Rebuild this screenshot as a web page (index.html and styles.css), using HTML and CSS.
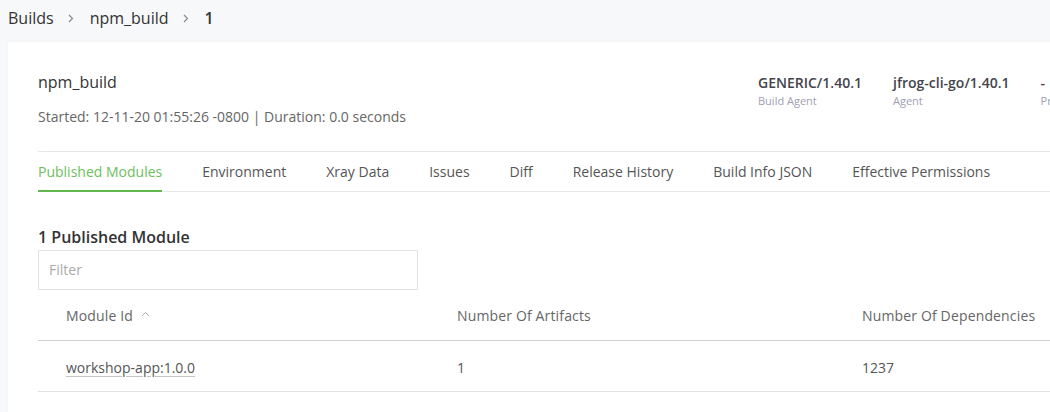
FILE: index.html
```html
<!DOCTYPE html>
<html>
<head>
<meta charset="utf-8">
<link rel="stylesheet" href="styles.css">
</head>
<body>
<nav class="breadcrumb">
  <span class="crumb">Builds</span>
  <svg class="sep" width="6" height="9" viewBox="0 0 6 9"><path d="M1 1l3.5 3.5L1 8" fill="none" stroke="#8a8a8a" stroke-width="1.2"/></svg>
  <span class="crumb">npm_build</span>
  <svg class="sep" width="6" height="9" viewBox="0 0 6 9"><path d="M1 1l3.5 3.5L1 8" fill="none" stroke="#8a8a8a" stroke-width="1.2"/></svg>
  <span class="crumb current">1</span>
</nav>
<main class="card">
  <section class="summary">
    <div class="summary-main">
      <h1 class="title">npm_build</h1>
      <p class="meta">Started: 12-11-20 01:55:26 -0800 | Duration: 0.0 seconds</p>
    </div>
    <div class="agents">
      <div class="agent"><div class="agent-value">GENERIC/1.40.1</div><div class="agent-label">Build Agent</div></div>
      <div class="agent"><div class="agent-value">jfrog-cli-go/1.40.1</div><div class="agent-label">Agent</div></div>
      <div class="agent"><div class="agent-value">-</div><div class="agent-label">Principal</div></div>
    </div>
  </section>
  <div class="tabs">
    <span class="tab active">Published Modules</span>
    <span class="tab">Environment</span>
    <span class="tab">Xray Data</span>
    <span class="tab">Issues</span>
    <span class="tab">Diff</span>
    <span class="tab">Release History</span>
    <span class="tab">Build Info JSON</span>
    <span class="tab">Effective Permissions</span>
  </div>
  <h2 class="section-title">1 Published Module</h2>
  <div class="filter">Filter</div>
  <div class="table">
    <div class="row head">
      <div class="cell">Module Id <svg class="sort" width="9" height="6" viewBox="0 0 9 6"><path d="M1 5l3.5-3.5L8 5" fill="none" stroke="#a8a8a8" stroke-width="1"/></svg></div>
      <div class="cell">Number Of Artifacts</div>
      <div class="cell">Number Of Dependencies</div>
    </div>
    <div class="row">
      <div class="cell"><span class="link">workshop-app:1.0.0</span></div>
      <div class="cell">1</div>
      <div class="cell">1237</div>
    </div>
  </div>
</main>
</body>
</html>
```

FILE: styles.css
```css
html, body {
  margin: 0;
  padding: 0;
}
body {
  background: #f7f8fa;
  font-family: "Open Sans", "Noto Sans", sans-serif;
  color: #333;
  width: 1050px;
  height: 412px;
  overflow: hidden;
}
.breadcrumb {
  display: flex;
  align-items: center;
  padding: 6px 0 0 8px;
  height: 24px;
  font-size: 16px;
  line-height: 24px;
  color: #333;
}
.sep {
  margin: 1px 16px 0 14px;
}
.crumb.current {
  font-weight: 600;
}
.card {
  margin: 12px 0 0 8px;
  width: 1200px;
  background: #fff;
  box-shadow: 0 0 3px rgba(0, 0, 0, 0.04);
  padding: 30px 30px 40px 30px;
  min-height: 400px;
}
.summary {
  display: flex;
}
.summary-main {
  width: 720px;
}
.title {
  margin: 0;
  font-size: 16px;
  line-height: 20px;
  font-weight: 400;
  color: #333;
}
.meta {
  margin: 16px 0 0 0;
  font-size: 14px;
  line-height: 18px;
  color: #666;
}
.agents {
  display: flex;
  gap: 31px;
  margin-top: 1px;
}
.agent-value {
  font-size: 14px;
  line-height: 19px;
  font-weight: 600;
  color: #44444c;
}
.agent-label {
  margin-top: 2px;
  font-size: 11px;
  line-height: 14px;
  color: #a0a0b2;
}
.tabs {
  margin-top: 25px;
  display: flex;
  gap: 40px;
  border-top: 1px solid #e6e6ee;
  border-bottom: 1px solid #e8e8ec;
  width: 1012px;
}
.tab {
  font-size: 14px;
  line-height: 40px;
  height: 39px;
  color: #555;
  box-sizing: border-box;
}
.tab.active {
  color: #6cbf5c;
  border-bottom: 2px solid #62b84f;
  height: 40px;
  margin-bottom: -1px;
}
.section-title {
  margin: 34px 0 0 0;
  font-size: 16px;
  line-height: 22px;
  font-weight: 600;
  color: #333;
}
.filter {
  margin-top: 2px;
  width: 380px;
  height: 40px;
  box-sizing: border-box;
  border: 1px solid #e3e3e3;
  padding-left: 10px;
  font-size: 14px;
  line-height: 38px;
  color: #aaa;
}
.table {
  width: 1100px;
}
.row {
  display: grid;
  grid-template-columns: 391px 405px 1fr;
  height: 50px;
  border-bottom: 1px solid #e2e2e2;
  align-items: center;
  font-size: 14px;
  color: #555;
}
.row.head {
  border-bottom-color: #cfcfcf;
  color: #666;
  font-weight: 500;
  letter-spacing: 0.15px;
}
.cell {
  padding-left: 28px;
  display: flex;
  align-items: center;
}
.row:not(.head) .cell {
  padding-top: 2px;
}
.sort {
  margin-left: 8px;
  margin-top: -2px;
}
.link {
  text-decoration: underline;
  text-decoration-color: #c4c4c4;
  text-underline-offset: 3px;
}
```
